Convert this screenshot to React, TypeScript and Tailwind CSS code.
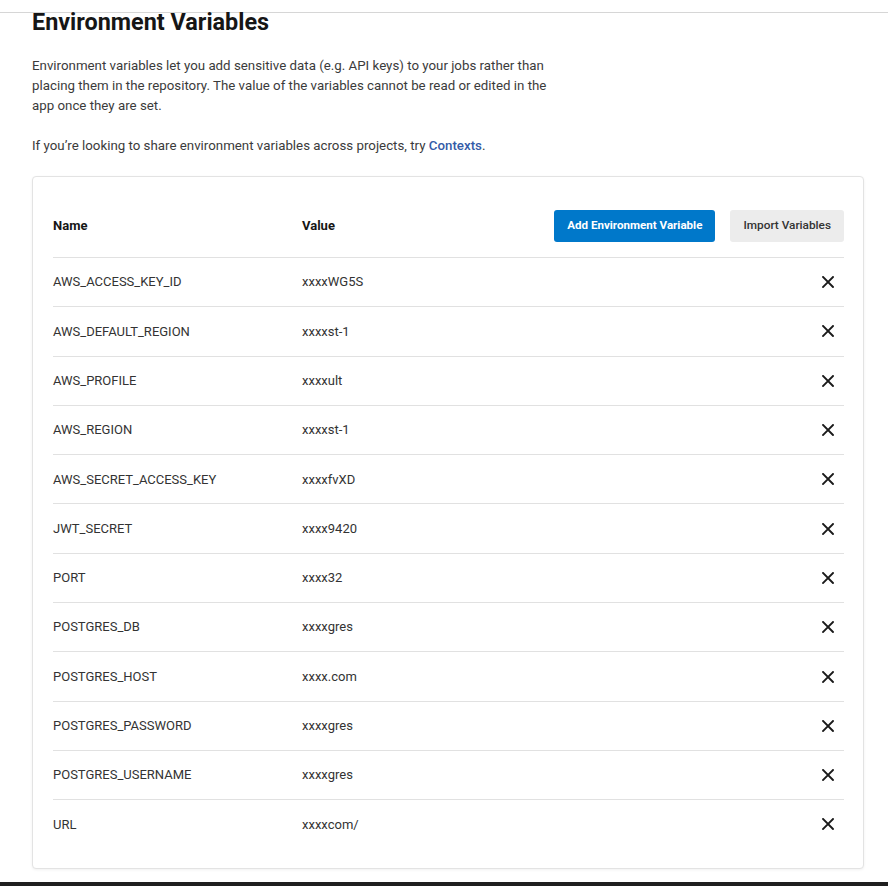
import React from 'react';

const variables = [
  { name: 'AWS_ACCESS_KEY_ID', value: 'xxxxWG5S' },
  { name: 'AWS_DEFAULT_REGION', value: 'xxxxst-1' },
  { name: 'AWS_PROFILE', value: 'xxxxult' },
  { name: 'AWS_REGION', value: 'xxxxst-1' },
  { name: 'AWS_SECRET_ACCESS_KEY', value: 'xxxxfvXD' },
  { name: 'JWT_SECRET', value: 'xxxx9420' },
  { name: 'PORT', value: 'xxxx32' },
  { name: 'POSTGRES_DB', value: 'xxxxgres' },
  { name: 'POSTGRES_HOST', value: 'xxxx.com' },
  { name: 'POSTGRES_PASSWORD', value: 'xxxxgres' },
  { name: 'POSTGRES_USERNAME', value: 'xxxxgres' },
  { name: 'URL', value: 'xxxxcom/' },
];

function CloseIcon() {
  return (
    <svg width="12" height="12" viewBox="0 0 12 12" fill="none">
      <path d="M1 1L11 11M11 1L1 11" stroke="#1a1a1a" strokeWidth="1.9" strokeLinecap="square" />
    </svg>
  );
}

export default function App() {
  return (
    <div className="min-h-[886px] bg-white font-['Roboto','Liberation_Sans',sans-serif] text-[#333]">
      {/* header edge from the scrolled page */}
      <div className="h-[13px] border-b border-[#d6d6d6]" />

      <div className="pl-8 pr-6">
        <h2 className="-mt-[3px] text-[23.4px] font-bold leading-[24px] text-[#161616]">Environment Variables</h2>

        <p className="mt-[22px] max-w-[525px] text-[13.3px] leading-[20px] text-[#3b3b3b]">
          Environment variables let you add sensitive data (e.g. API keys) to your jobs rather than placing them in the
          repository. The value of the variables cannot be read or edited in the app once they are set.
        </p>
        <p className="mt-[20px] text-[13.3px] leading-[20px] text-[#3b3b3b]">
          If you’re looking to share environment variables across projects, try{' '}
          <a href="#" className="font-medium text-[#345ba8]">
            Contexts
          </a>
          .
        </p>

        {/* variables card */}
        <div className="mt-[20px] w-[832px] rounded-[4px] border border-[#e3e3e3] bg-white pl-[20px] pr-[19px] pb-[19px] shadow-[0_1px_3px_rgba(0,0,0,0.06)]">
          <div className="flex items-center border-b border-[#e1e1e1] pt-[33px] pb-[15px]">
            <div className="w-[249px] text-[13px] font-bold text-[#161616]">Name</div>
            <div className="flex-1 text-[13px] font-bold text-[#161616]">Value</div>
            <button className="h-[32px] rounded-[3px] bg-[#0078ca] px-[13px] text-[11.6px] font-bold text-white">
              Add Environment Variable
            </button>
            <button className="ml-[15px] h-[32px] rounded-[3px] bg-[#ececec] px-[13px] text-[11.8px] font-medium text-[#333]">
              Import Variables
            </button>
          </div>

          {variables.map((v, i) => (
            <div
              key={v.name}
              className={
                i === variables.length - 1
                  ? 'flex h-[48.3px] items-center text-[13px]'
                  : 'flex h-[49.3px] items-center border-b border-[#e1e1e1] text-[13px]'
              }
            >
              <div className="w-[249px] text-[#333]">{v.name}</div>
              <div className="flex-1 text-[#333]">{v.value}</div>
              <button className="mr-[8px] flex h-[16px] w-[16px] items-center justify-center">
                <CloseIcon />
              </button>
            </div>
          ))}
        </div>
      </div>

      <div className="mt-[13px] h-[40px] bg-[#1f1f1f]" />
    </div>
  );
}
